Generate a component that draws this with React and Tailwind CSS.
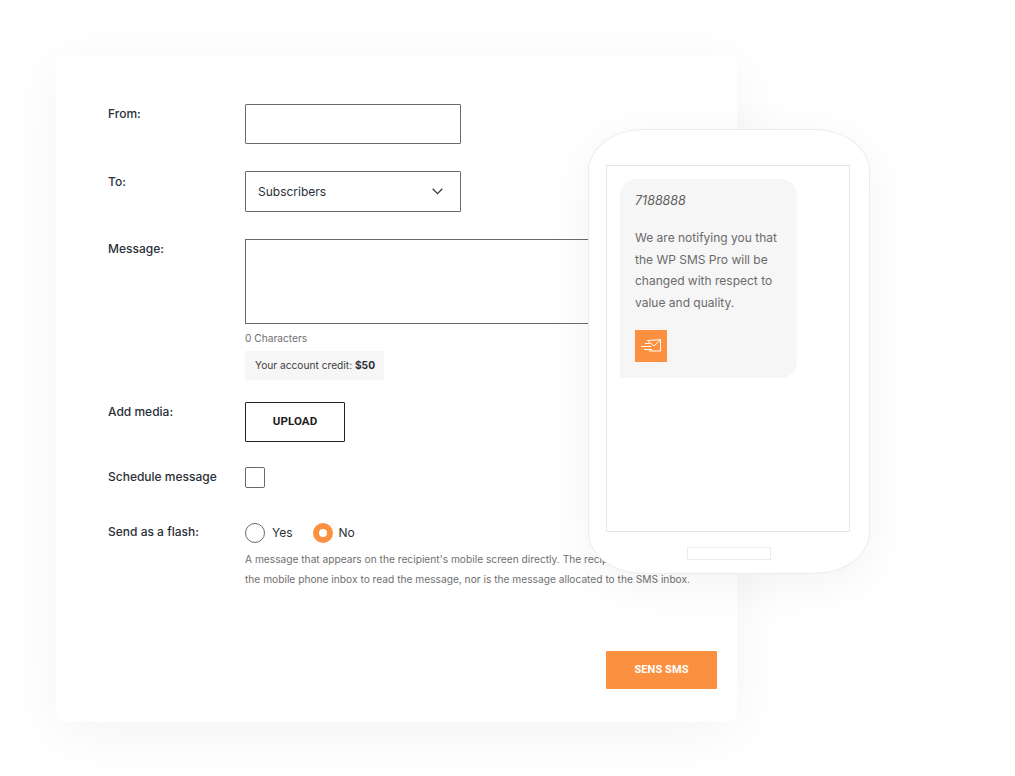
import React from 'react';

const Label = ({ children, className = 'pt-[1px]' }) => (
  <div className={`w-[137px] shrink-0 text-[12px] leading-[18px] font-medium text-[#2b2f38] ${className}`}>{children}</div>
);

const SendIcon = () => (
  <svg width="20" height="13" viewBox="0 0 20 13" fill="none" stroke="#fff" strokeWidth="1">
    <path d="M6.5 1.5 L19.5 0.7 L19.5 12 L8 12" />
    <path d="M6.5 1.5 L13 7 L19.5 0.7" />
    <path d="M4 4.5 H9 M0 7.5 H10 M3 10.5 H11" />
  </svg>
);

const Phone = () => (
  <div className="absolute left-[588px] top-[129px] w-[282px] h-[445px] bg-white border border-[#ececec] rounded-[56px/42px] shadow-[0_10px_50px_rgba(0,0,0,0.05)] px-[17px] pt-[35px]">
    <div className="w-[244px] h-[367px] border border-[#e6e6e6] pt-[13px] pl-[13px]">
      <div className="w-[177px] h-[199px] bg-[#f6f6f6] rounded-[16px] rounded-bl-none pt-[13px] pl-[15px]">
        <p className="text-[12.5px] italic leading-[17px] text-[#5f5f5f]">7188888</p>
        <p className="mt-[18px] text-[12px] leading-[21.7px] text-[#6a6a6a] whitespace-nowrap">
          We are notifying you that<br />the WP SMS Pro will be<br />changed with respect to<br />value and quality.
        </p>
        <div className="mt-[16px] w-[32px] h-[32px] bg-[#fb9140] flex items-center justify-center">
          <SendIcon />
        </div>
      </div>
    </div>
    <div className="mx-auto mt-[15px] w-[84px] h-[13px] border border-[#ececec]" />
  </div>
);

export default function App() {
  return (
    <div className="relative w-[1015px] h-[776px] bg-white overflow-hidden font-['Inter',sans-serif]">
      <div className="absolute left-[56px] top-[56px] w-[681px] h-[666px] bg-white rounded-[10px] shadow-[0_10px_60px_rgba(0,0,0,0.05)] pl-[52px] pt-[48px]">
        <div className="flex">
          <Label>From:</Label>
          <div className="w-[216px] h-[40px] border border-[#6b6b6b] rounded-[1px]" />
        </div>
        <div className="flex mt-[27px]">
          <Label className="pt-[2px]">To:</Label>
          <div className="w-[216px] h-[41px] border border-[#6b6b6b] rounded-[1px] flex items-center justify-between pl-[12px] pr-[17px]">
            <span className="text-[12px] text-[#2b2f38]">Subscribers</span>
            <svg width="11" height="7" viewBox="0 0 11 7" fill="none" stroke="#3a3a3a" strokeWidth="1.3">
              <path d="M0.7 0.8 L5.5 5.6 L10.3 0.8" />
            </svg>
          </div>
        </div>
        <div className="flex mt-[27px]">
          <Label>Message:</Label>
          <div>
            <div className="w-[446px] h-[85px] border border-[#6b6b6b]" />
            <p className="mt-[7px] text-[10.2px] leading-[14px] text-[#6f6f6f]">0 Characters</p>
            <div className="mt-[6px] w-[139px] h-[29px] bg-[#f6f6f6] flex items-center pl-[10px] pt-[1px] text-[10.2px] text-[#3d3d3d] whitespace-nowrap">
              <span>Your account credit: <b className="font-bold text-[#2b2f38]">$50</b></span>
            </div>
          </div>
        </div>
        <div className="flex mt-[22px]">
          <Label>Add media:</Label>
          <button className="w-[100px] h-[40px] border border-[#222] rounded-[1px] text-[11.5px] font-bold tracking-[0.1px] text-[#1e1e1e] font-['Roboto',sans-serif]">UPLOAD</button>
        </div>
        <div className="flex items-center mt-[25px]">
          <Label className="pb-[2px]">Schedule message</Label>
          <div className="w-[20px] h-[21px] border border-[#6b6b6b] rounded-[2px]" />
        </div>
        <div className="flex mt-[34px]">
          <Label>Send as a flash:</Label>
          <div>
            <div className="flex items-center h-[21px]">
              <span className="w-[20px] h-[20px] rounded-full border border-[#6b6b6b]" />
              <span className="ml-[7px] text-[12px] text-[#2b2f38]">Yes</span>
              <span className="ml-[20px] w-[20px] h-[20px] rounded-full border-[6px] border-[#fb9140] bg-white" />
              <span className="ml-[6px] text-[12px] text-[#2b2f38]">No</span>
            </div>
            <p className="mt-[6px] text-[10.2px] leading-[20px] text-[#6f6f6f] whitespace-nowrap">
              A message that appears on the recipient's mobile screen directly. The recipient does not need to open<br />
              the mobile phone inbox to read the message, nor is the message allocated to the SMS inbox.
            </p>
          </div>
        </div>
        <div className="flex justify-end pr-[20px] mt-[62px]">
          <button className="w-[111px] h-[38px] bg-[#fb9140] rounded-[1px] pt-[1px] text-[11px] font-bold tracking-[0.1px] text-white font-['Roboto',sans-serif]">SENS SMS</button>
        </div>
      </div>
      <Phone />
    </div>
  );
}
